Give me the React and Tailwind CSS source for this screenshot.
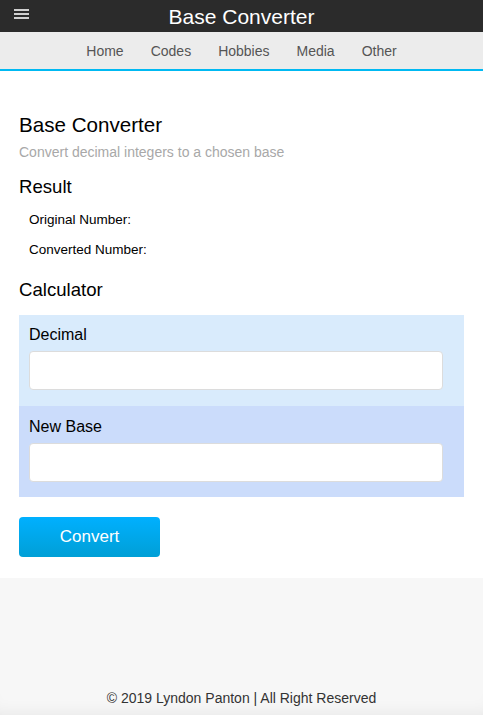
import React from 'react';

const navItems = ['Home', 'Codes', 'Hobbies', 'Media', 'Other'];

const Field = ({ label, tone, extra }) => (
  <div className={`pl-[10px] pr-[21px] ${extra} ${tone}`}>
    <label className="block text-[16px] leading-[20px] text-black mb-[6px]">{label}</label>
    <input
      type="text"
      className="block w-full h-[39px] bg-white border border-[#dcdcdc] rounded-[4px] outline-none"
    />
  </div>
);

export default function App() {
  return (
    <div className="min-h-screen flex flex-col bg-[#f7f7f7] font-['Liberation_Sans',Arial,sans-serif]">
      {/* Top bar */}
      <header className="relative h-[32px] bg-[#2b2b2b] flex items-center justify-center">
        <button className="absolute left-[14px] top-[9px] flex flex-col gap-[2px]">
          <span className="block w-[15px] h-[2px] bg-[#d0d0d0]" />
          <span className="block w-[15px] h-[2px] bg-[#d0d0d0]" />
          <span className="block w-[15px] h-[2px] bg-[#d0d0d0]" />
        </button>
        <h1 className="text-white text-[21px] leading-none">Base Converter</h1>
      </header>

      {/* Nav */}
      <nav className="h-[39px] bg-[#ececec] border-b-[2px] border-[#00b9f2] flex items-center justify-center gap-[27px]">
        {navItems.map((item) => (
          <a key={item} href="#" className="text-[14px] text-[#555] leading-none">
            {item}
          </a>
        ))}
      </nav>

      {/* Content */}
      <main className="bg-white px-[19px] pt-[42px] pb-[21px]">
        <h2 className="text-[20.6px] leading-[24px] text-black">Base Converter</h2>
        <p className="text-[14px] leading-[16px] text-[#a8a8a8] mt-[7px]">
          Convert decimal integers to a chosen base
        </p>

        <h3 className="text-[18.6px] leading-[22px] text-black mt-[16px]">Result</h3>
        <div className="pl-[10px] text-[13.5px] text-black">
          <p className="mt-[14px] leading-[16px]">Original Number:</p>
          <p className="mt-[14px] leading-[16px]">Converted Number:</p>
        </div>

        <h3 className="text-[18.6px] leading-[22px] text-black mt-[21px]">Calculator</h3>
        <div className="mt-[14px]">
          <Field label="Decimal" tone="bg-[#d9ebfc]" extra="pt-[10px] pb-[16px]" />
          <Field label="New Base" tone="bg-[#cbdcfb]" extra="pt-[11px] pb-[15px]" />
        </div>

        <button className="mt-[20px] w-[141px] h-[40px] rounded-[4px] bg-gradient-to-b from-[#00b0ff] to-[#009fd6] text-white text-[17px]">
          Convert
        </button>
      </main>

      {/* Footer */}
      <footer className="flex-1 flex items-end justify-center pb-[6px] shadow-[inset_0_-14px_18px_-14px_rgba(0,0,0,0.08)]">
        <p className="text-[14px] text-[#333]">© 2019 Lyndon Panton | All Right Reserved</p>
      </footer>
    </div>
  );
}
